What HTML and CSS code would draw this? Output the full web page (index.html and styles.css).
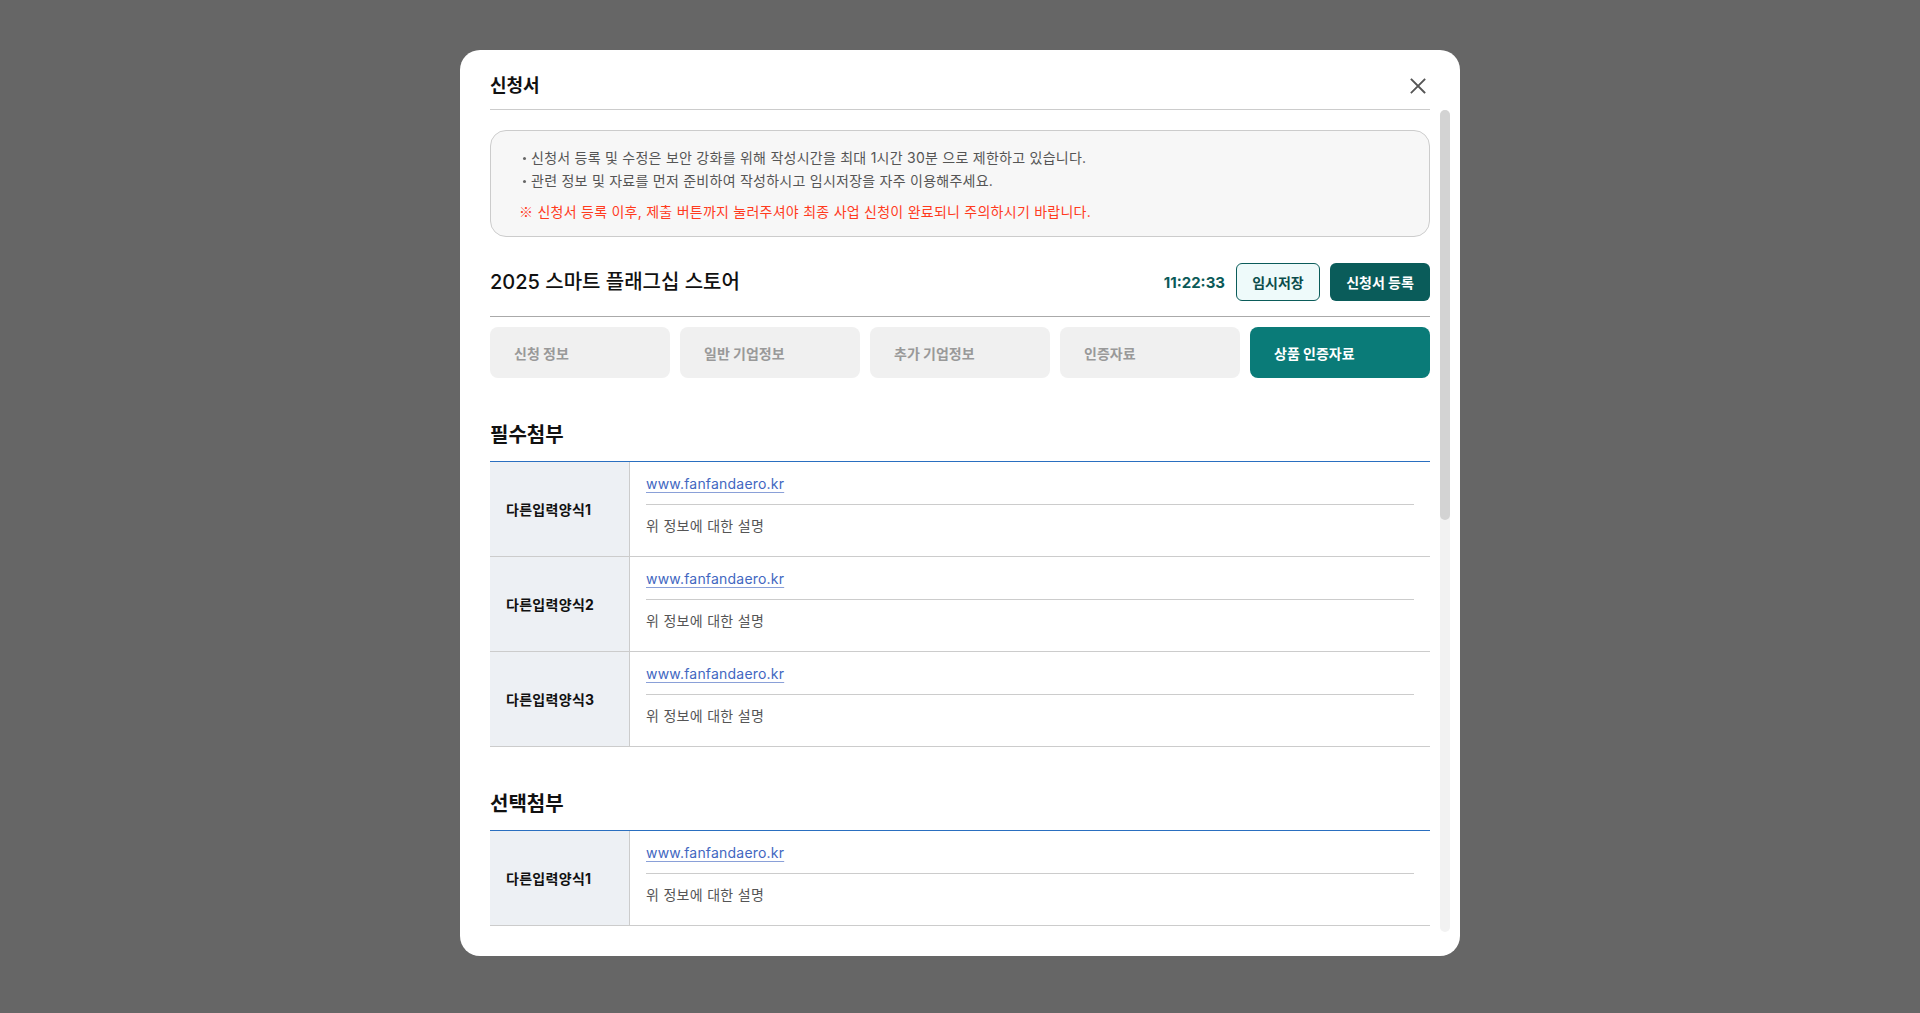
FILE: index.html
```html
<!DOCTYPE html>
<html lang="ko">
<head>
<meta charset="utf-8">
<title>신청서</title>
<link rel="stylesheet" href="styles.css">
</head>
<body>
<div class="overlay">
  <div class="modal">
    <div class="modal-header">
      <h1 class="modal-title">신청서</h1>
      <button class="close-btn" aria-label="닫기">
        <svg width="16" height="16" viewBox="0 0 16 16"><path d="M1.5 1.5 L14.5 14.5 M14.5 1.5 L1.5 14.5" stroke="#555" stroke-width="1.8" fill="none" stroke-linecap="square"/></svg>
      </button>
    </div>
    <div class="modal-main">
      <div class="modal-body">
        <div class="notice">
          <ul class="notice-list">
            <li>신청서 등록 및 수정은 보안 강화를 위해 작성시간을 최대 1시간 30분 으로 제한하고 있습니다.</li>
            <li>관련 정보 및 자료를 먼저 준비하여 작성하시고 임시저장을 자주 이용해주세요.</li>
          </ul>
          <p class="notice-warn"><span class="mark">※</span> 신청서 등록 이후, 제출 버튼까지 눌러주셔야 최종 사업 신청이 완료되니 주의하시기 바랍니다.</p>
        </div>

        <div class="title-row">
          <h2 class="program-title">2025 스마트 플래그십 스토어</h2>
          <div class="actions">
            <span class="timer">11:22:33</span>
            <button class="btn btn-outline">임시저장</button>
            <button class="btn btn-solid">신청서 등록</button>
          </div>
        </div>

        <div class="tabs">
          <div class="tab">신청 정보</div>
          <div class="tab">일반 기업정보</div>
          <div class="tab">추가 기업정보</div>
          <div class="tab">인증자료</div>
          <div class="tab active">상품 인증자료</div>
        </div>

        <section class="section">
          <h3 class="section-title">필수첨부</h3>
          <div class="table">
            <div class="row">
              <div class="label">다른입력양식1</div>
              <div class="cell">
                <div class="cell-link"><a href="#">www.fanfandaero.kr</a></div>
                <div class="cell-desc">위 정보에 대한 설명</div>
              </div>
            </div>
            <div class="row">
              <div class="label">다른입력양식2</div>
              <div class="cell">
                <div class="cell-link"><a href="#">www.fanfandaero.kr</a></div>
                <div class="cell-desc">위 정보에 대한 설명</div>
              </div>
            </div>
            <div class="row">
              <div class="label">다른입력양식3</div>
              <div class="cell">
                <div class="cell-link"><a href="#">www.fanfandaero.kr</a></div>
                <div class="cell-desc">위 정보에 대한 설명</div>
              </div>
            </div>
          </div>
        </section>

        <section class="section">
          <h3 class="section-title">선택첨부</h3>
          <div class="table">
            <div class="row">
              <div class="label">다른입력양식1</div>
              <div class="cell">
                <div class="cell-link"><a href="#">www.fanfandaero.kr</a></div>
                <div class="cell-desc">위 정보에 대한 설명</div>
              </div>
            </div>
          </div>
        </section>
      </div>
      <div class="scrollbar" aria-hidden="true">
        <div class="scrollbar-thumb"></div>
      </div>
    </div>
  </div>
</div>
</body>
</html>
```

FILE: styles.css
```css
* { box-sizing: border-box; }

html, body {
  margin: 0;
  padding: 0;
  height: 100%;
}

body {
  background: #666666;
  font-family: Inter, "Noto Sans CJK KR", sans-serif;
  color: #111;
}

.overlay {
  display: flex;
  justify-content: center;
  padding-top: 50px;
}

.modal {
  width: 1000px;
  height: 906px;
  background: #fff;
  border-radius: 20px;
  display: flex;
  flex-direction: column;
  padding: 0 10px 24px 30px;
  overflow: hidden;
}

.modal-header {
  height: 60px;
  padding-top: 12px;
  margin-right: 20px;
  border-bottom: 1px solid #cccccc;
  display: flex;
  align-items: center;
  justify-content: space-between;
  flex-shrink: 0;
}

.modal-title {
  margin: 0;
  font-size: 18px;
  font-weight: 700;
  line-height: 24px;
  color: #111;
}

.close-btn {
  width: 24px;
  height: 24px;
  border: 0;
  padding: 0;
  background: transparent;
  display: flex;
  align-items: center;
  justify-content: center;
}

.modal-main {
  flex: 1;
  min-height: 0;
  display: flex;
}

.modal-body {
  flex: 1;
  min-width: 0;
  overflow: hidden;
  padding-right: 10px;
}

.scrollbar {
  width: 10px;
  flex-shrink: 0;
  background: #f2f2f2;
  border-radius: 5px;
}

.scrollbar-thumb {
  height: 410px;
  background: #d3d3d3;
  border-radius: 5px;
}

.notice {
  margin-top: 20px;
  height: 107px;
  border: 1px solid #cccccc;
  border-radius: 16px;
  background: #f7f7f7;
  padding: 15px 24px 13px 28px;
  font-size: 14px;
  line-height: 23px;
  letter-spacing: 0.25px;
}

.notice-list {
  list-style: none;
  margin: 0;
  padding: 0;
  color: #555;
}

.notice-list li {
  position: relative;
  padding-left: 12px;
}

.notice-list li::before {
  content: "";
  position: absolute;
  left: 4px;
  top: 11px;
  width: 3px;
  height: 3px;
  border-radius: 50%;
  background: #666;
}

.notice-warn {
  margin: 8px 0 0;
  color: #ff3b1e;
}

.notice-warn .mark {
  font-family: "Noto Sans CJK KR", sans-serif;
}

.title-row {
  margin-top: 26px;
  padding-bottom: 15px;
  border-bottom: 1px solid #aaaaaa;
  display: flex;
  align-items: center;
  justify-content: space-between;
}

.program-title {
  margin: 0;
  font-size: 20px;
  font-weight: 500;
  line-height: 28px;
  color: #111;
}

.actions {
  display: flex;
  align-items: center;
  gap: 10px;
}

.timer {
  font-size: 15px;
  font-weight: 700;
  color: #0b5a58;
  margin-right: 1px;
}

.btn {
  height: 38px;
  border-radius: 6px;
  font-family: inherit;
  font-size: 14px;
  font-weight: 700;
  padding: 0;
  cursor: pointer;
}

.btn-outline {
  width: 84px;
  border: 1px solid #0b5c5a;
  background: #eefafa;
  color: #0b4d4b;
}

.btn-solid {
  width: 100px;
  border: 0;
  background: #0a5c5a;
  color: #fff;
}

.tabs {
  margin-top: 10px;
  display: grid;
  grid-template-columns: repeat(5, 1fr);
  gap: 10px;
}

.tab {
  height: 51px;
  border-radius: 8px;
  background: #f0f0f0;
  color: #999;
  font-size: 14px;
  font-weight: 700;
  display: flex;
  align-items: center;
  padding-left: 24px;
}

.tab.active {
  background: #0a7b78;
  color: #fff;
}

.section {
  margin-top: 44px;
}

.section-title {
  margin: 0 0 13px;
  font-size: 20px;
  font-weight: 700;
  line-height: 26px;
  color: #111;
}

.table {
  border-top: 1px solid #2a6fc0;
}

.row {
  display: flex;
  border-bottom: 1px solid #cccccc;
}

.label {
  width: 140px;
  flex-shrink: 0;
  background: #edf0f4;
  border-right: 1px solid #cccccc;
  font-size: 14px;
  font-weight: 700;
  letter-spacing: 0.3px;
  color: #111;
  display: flex;
  align-items: center;
  padding-left: 16px;
}

.cell {
  flex: 1;
  padding: 0 16px;
}

.cell-link {
  padding: 12px 0 10px;
  line-height: 20px;
  font-size: 14px;
  border-bottom: 1px solid #cccccc;
}

.cell-link a {
  color: #4267c1;
  letter-spacing: 0.2px;
  text-decoration: underline;
  text-decoration-color: #8aa0d8;
  text-underline-offset: 3px;
}

.cell-desc {
  padding: 11px 0 20px;
  line-height: 20px;
  font-size: 14px;
  letter-spacing: 0.3px;
  color: #555;
}
```
